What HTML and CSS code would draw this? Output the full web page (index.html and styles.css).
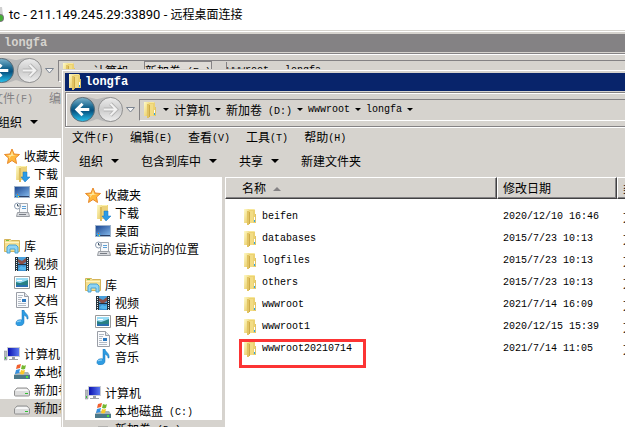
FILE: index.html
```html
<!DOCTYPE html>
<html lang="zh-CN">
<head>
<meta charset="utf-8">
<title>tc - 211.149.245.29:33890 - 远程桌面连接</title>
<link rel="stylesheet" href="styles.css">
</head>
<body>

<!-- icons -->
<svg class="defs" width="0" height="0">
  <defs>
    <linearGradient id="gold" x1="0" x2="1" y2="1"><stop offset="0" stop-color="#fffbc8"/><stop offset="1" stop-color="#e6c65c"/></linearGradient>
    <linearGradient id="blue" x1="0" y1="0" x2="0" y2="1"><stop offset="0" stop-color="#7fb4cc"/><stop offset=".4" stop-color="#17668f"/><stop offset=".55" stop-color="#06507f"/><stop offset="1" stop-color="#27c4f0"/></linearGradient>
    <linearGradient id="silver" x1="0" y1="0" x2="0" y2="1"><stop offset="0" stop-color="#ececec"/><stop offset=".5" stop-color="#cccccc"/><stop offset="1" stop-color="#eeeeee"/></linearGradient>
    <linearGradient id="screen" x1="0" y1="0" x2="1" y2="1"><stop offset="0" stop-color="#1c4690"/><stop offset="1" stop-color="#7fb4e8"/></linearGradient>
    <linearGradient id="monitor" x1="0" x2="1"><stop offset="0" stop-color="#0a10b0"/><stop offset="1" stop-color="#5a78f0"/></linearGradient>
  </defs>
  <symbol id="folder" viewBox="0 0 16 16">
    <path d="M2 0h10l1 1v13H2z" fill="#ecd272"/>
    <path d="M2 0h5v14H2z" fill="url(#gold)"/>
    <path d="M7 0h5v1H7z" fill="#f8e898"/>
    <path d="M5 2h2v14H5z" fill="#e2c462"/>
    <path d="M7 3h1v12H7z" fill="#cdaa48"/>
    <path d="M8 2h3v12H8z" fill="#f2dc84"/>
    <path d="M13 5h1v9h-1z" fill="#e0c468"/>
    <path d="M12 8h1v3h-1z" fill="#fff"/><path d="M12 11h1v2h-1z" fill="#2aa6e8"/>
  </symbol>
  <symbol id="star" viewBox="0 0 16 16">
    <path d="M8 1l2 5 5.500.500-4 3.500 1 5.500L8 12.500 3.500 15.500l1-5.500-4-3.500L6 6z" fill="#ffb83c" stroke="#e8892a"/>
    <path d="M8 3l1 4 3 .5-5 .5-2 3 .5-3L3 7l4 0z" fill="#ffe9a0"/>
  </symbol>
  <symbol id="download" viewBox="0 0 16 16">
    <path d="M2 0h11v14H2z" fill="#ecd27a"/>
    <path d="M2 0h5v14H2z" fill="url(#gold)"/>
    <path d="M7 0h5v1H7z" fill="#fdf2a8"/>
    <path d="M5 2h2v14H5z" fill="#dcbc5c"/>
    <path d="M9 6h4v5h3l-5 5-4-5h2z" fill="#2b9be6" stroke="#1674bc" stroke-width=".5"/>
  </symbol>
  <symbol id="desktop" viewBox="0 0 16 16">
    <path d="M0 2h16v12H0z" fill="#9fb4cc"/><path d="M1 3h14v9H1z" fill="url(#screen)"/>
    <path d="M1 12h14v1H1z" fill="#2b3f66"/>
    <circle cx="3.500" cy="11.500" r="2" fill="#35a0e0"/><path d="M3 10h1v1H3z" fill="#f05a28"/><path d="M4 12h1v1H4z" fill="#ffd21e"/>
  </symbol>
  <symbol id="recent" viewBox="0 0 16 16">
    <path d="M5.500 1.500h8v9h-8z" fill="#f6f8fa" stroke="#a4aab2"/>
    <path d="M8 4.500h4M8 6.500h4" stroke="#5aa0d8"/>
    <path d="M3.500 10.500h11l1 4h-13z" fill="#d8dade" stroke="#9a9ea4"/><path d="M5 12.500h7" stroke="#777c84"/>
    <circle cx="3.500" cy="4" r="3" fill="#fff" stroke="#8c9cb0"/><path d="M3.500 2v2h2" fill="none" stroke="#405468"/>
  </symbol>
  <symbol id="library" viewBox="0 0 16 16">
    <path d="M.5 1.500h6l1 1h8v11H.5z" fill="#f4df90" stroke="#d4b45a"/>
    <path d="M2 2h3v1H2z" fill="#7cc040"/><path d="M1 4h14v1H1z" fill="#fff4c0"/>
    <path d="M3 15V9l2-2h7l2 2v6h-3v-4H6v4z" fill="#8fd4f4" stroke="#4aa2d2"/>
  </symbol>
  <symbol id="video" viewBox="0 0 16 16">
    <path d="M1 1h14v14H1z" fill="#26333c"/><path d="M4 1h8v7H4z" fill="#4aa0dc"/><path d="M4 9h8v6H4z" fill="#3c90d0"/>
    <path d="M4 3l4 2 4-3v4l-3 2H6L4 6z" fill="#8a5048"/><path d="M4 13l3-3 3 1 2-1v4H8z" fill="#55b8ec"/>
    <path d="M2.500 2v13M13.500 2v13" stroke="#e8f0f0" stroke-dasharray="1 1"/>
  </symbol>
  <symbol id="picture" viewBox="0 0 16 16">
    <path d="M.5 2.500h15v12H.5z" fill="#fff" stroke="#9a9a9a"/>
    <path d="M2 4h12v9H2z" fill="#9adcf5"/><path d="M2 8l4 1 3-1 5-2v7H2z" fill="#288084"/><path d="M2 11h12v2H2z" fill="#2a6fb0"/><path d="M3 6h5v1H3z" fill="#fff"/>
  </symbol>
  <symbol id="document" viewBox="0 0 16 16">
    <path d="M2.500.500h8l4 4v11h-12z" fill="#fafbfd" stroke="#9a9ea6"/><path d="M10.500.500v4h4" fill="#dfe4ea" stroke="#9a9ea6"/>
    <path d="M4 3.500h5M4 5.500h4M4 7.500h3M4 9.500h3M4 11.500h8M4 13.500h8" stroke="#b2bac4"/><path d="M8 7h4v3H8z" fill="#2a78c0"/>
  </symbol>
  <symbol id="music" viewBox="0 0 16 16">
    <path d="M8 0h2c0 3 5 4 4 9h-1c0-3-2-3-3-4v7c0 5-9 5-8 1 0-3 4-4 6-3z" fill="#2e9ce2" stroke="#1873b8" stroke-width=".5"/>
    <path d="M3 12c1-1 3-1 4-1" stroke="#a4dcfa" fill="none"/>
  </symbol>
  <symbol id="computer" viewBox="0 0 16 16">
    <path d="M0 5h3v9H0z" fill="#b8bcc0" stroke="#8a8e94" stroke-width=".5"/><path d="M1 11h1v2H1z" fill="#38c038"/>
    <path d="M3 1h13v10H3z" fill="#c8ccd4"/><path d="M4 2h11v8H4z" fill="url(#monitor)"/>
    <path d="M8 11h3v2h3v1H5v-1h3z" fill="#9ca0a8"/>
  </symbol>
  <symbol id="system" viewBox="0 0 16 16">
    <path d="M2 8h12l2 3v3H0v-3z" fill="#a8b4b8"/><path d="M0 11h16v4H0z" fill="#4c7888"/><path d="M12 12h2v2h-2z" fill="#48e040"/>
    <path d="M3 1l4-1-1 4-4 1z" fill="#f06030"/><path d="M8 1c2 1 3 1 4 0l-1 4c-2 1-3 0-4 0z" fill="#74b830"/>
    <path d="M2 6l4-1-1 4-4 1z" fill="#3490e0"/><path d="M7 6c2 1 3 0 4 0l-1 4c-2 1-3 0-4 0z" fill="#fcc828"/>
  </symbol>
  <symbol id="drive" viewBox="0 0 16 16">
    <path d="M3 6h10l2.500 3v4q0 1-1 1h-13q-1 0-1-1V9z" fill="#dcdcdc" stroke="#909090"/><path d="M3 7h10l2 2H1z" fill="#f6f6f6"/>
    <path d="M11 11h3v1h-3z" fill="#30c030"/>
  </symbol>
  <symbol id="open" viewBox="0 0 16 16">
    <path d="M1.500 1.500h12v12h-12z" fill="#f4df90" stroke="#d4b45a"/><path d="M4.500 4.500h10v10h-10z" fill="#d8f0fc" stroke="#4aa2d2"/><path d="M6 7.500h6M6 9.500h6" stroke="#6abbe6"/>
  </symbol>
  <symbol id="travel" viewBox="0 0 58 28">
    <path d="M14 1q8 0 14 2h2q6-2 12-2a13 13 0 0 1 0 26q-6 0-12-3h-2q-6 3-14 3z" fill="#b8b8b8"/>
    <circle cx="14" cy="14" r="12.500" fill="url(#blue)" stroke="#5c6a74"/>
    <path d="M21 14H9M14 8l-6 6 6 6" fill="none" stroke="#fff" stroke-width="3"/>
    <circle cx="43" cy="14" r="12.500" fill="url(#silver)" stroke="#8c8c8c"/>
    <path d="M36 14h12M43 8l6 6-6 6" fill="none" stroke="#b4b4b4" stroke-width="4"/>
    <path d="M36 14h12M43 8l6 6-6 6" fill="none" stroke="#f2f2f2" stroke-width="2"/>
  </symbol>
  <symbol id="history" viewBox="0 0 9 6"><path d="M.5.500h8l-4 4.500z" fill="#f4f4f4" stroke="#7b8490"/></symbol>
</svg>

<header class="remote-bar">
  <svg class="remote-icon" viewBox="0 0 4 16"><path d="M0 0h2l1 8H0z" fill="#d0d0d0"/><circle cx="0" cy="11" r="4" fill="#777"/><circle cx="0" cy="11" r="3" fill="#43b035"/></svg>
  <span>tc - 211.149.245.29:33890 - <span class="zh">远程桌面连接</span></span>
</header>

<main class="desktop">

  <!-- E: window, behind -->
  <section class="window back">
    <div class="titlebar"><svg class="icon"><use href="#folder"/></svg>longfa</div>
    <div class="rebar">
      <button class="travel" aria-label="后退 前进"><svg><use href="#travel"/></svg></button>
      <button class="history" aria-label="历史"><svg><use href="#history"/></svg></button>
      <nav class="address">
        <svg class="icon"><use href="#folder"/></svg><i class="arrow"></i>
        <a href="#">计算机</a><i class="arrow"></i>
        <a href="#" class="hot">新加卷<span class="en"> (E:)</span></a><i class="arrow hot"></i>
        <a href="#" class="en">wwwroot</a><i class="arrow"></i>
        <a href="#" class="en">longfa</a><i class="arrow"></i>
      </nav>
    </div>
    <div class="menu">
      <button>文件<span class="en">(F)</span></button>
      <button>编辑<span class="en">(E)</span></button>
    </div>
    <div class="toolbar">
      <button class="drop">组织</button>
      <button aria-label="打开"><svg class="icon"><use href="#open"/></svg></button>
    </div>
    <div class="content">
      <nav class="tree">
        <ul>
          <li><a href="#" class="group"><svg class="icon"><use href="#star"/></svg>收藏夹</a></li>
          <li><a href="#"><svg class="icon"><use href="#download"/></svg>下载</a></li>
          <li><a href="#"><svg class="icon"><use href="#desktop"/></svg>桌面</a></li>
          <li><a href="#"><svg class="icon"><use href="#recent"/></svg>最近访问的位置</a></li>
        </ul>
        <ul>
          <li><a href="#" class="group"><svg class="icon"><use href="#library"/></svg>库</a></li>
          <li><a href="#"><svg class="icon"><use href="#video"/></svg>视频</a></li>
          <li><a href="#"><svg class="icon"><use href="#picture"/></svg>图片</a></li>
          <li><a href="#"><svg class="icon"><use href="#document"/></svg>文档</a></li>
          <li><a href="#"><svg class="icon"><use href="#music"/></svg>音乐</a></li>
        </ul>
        <ul>
          <li><a href="#" class="group"><svg class="icon"><use href="#computer"/></svg>计算机</a></li>
          <li><a href="#"><svg class="icon"><use href="#system"/></svg>本地磁盘</a></li>
          <li><a href="#"><svg class="icon"><use href="#drive"/></svg>新加卷</a></li>
          <li><a href="#" class="selected"><svg class="icon"><use href="#drive"/></svg>新加卷</a></li>
        </ul>
      </nav>
    </div>
  </section>

  <!-- D: window, active -->
  <section class="window front">
    <div class="titlebar"><svg class="icon"><use href="#folder"/></svg>longfa</div>
    <div class="rebar">
      <button class="travel" aria-label="后退 前进"><svg><use href="#travel"/></svg></button>
      <button class="history" aria-label="历史"><svg><use href="#history"/></svg></button>
      <nav class="address">
        <svg class="icon"><use href="#folder"/></svg><i class="arrow"></i>
        <a href="#">计算机</a><i class="arrow"></i>
        <a href="#">新加卷<span class="en"> (D:)</span></a><i class="arrow"></i>
        <a href="#" class="en">wwwroot</a><i class="arrow"></i>
        <a href="#" class="en">longfa</a><i class="arrow"></i>
      </nav>
    </div>
    <div class="menu">
      <button>文件<span class="en">(F)</span></button>
      <button>编辑<span class="en">(E)</span></button>
      <button>查看<span class="en">(V)</span></button>
      <button>工具<span class="en">(T)</span></button>
      <button>帮助<span class="en">(H)</span></button>
    </div>
    <div class="toolbar">
      <button class="drop">组织</button>
      <button class="drop">包含到库中</button>
      <button class="drop">共享</button>
      <button>新建文件夹</button>
    </div>
    <div class="content">
      <nav class="tree">
        <ul>
          <li><a href="#" class="group"><svg class="icon"><use href="#star"/></svg>收藏夹</a></li>
          <li><a href="#"><svg class="icon"><use href="#download"/></svg>下载</a></li>
          <li><a href="#"><svg class="icon"><use href="#desktop"/></svg>桌面</a></li>
          <li><a href="#"><svg class="icon"><use href="#recent"/></svg>最近访问的位置</a></li>
        </ul>
        <ul>
          <li><a href="#" class="group"><svg class="icon"><use href="#library"/></svg>库</a></li>
          <li><a href="#"><svg class="icon"><use href="#video"/></svg>视频</a></li>
          <li><a href="#"><svg class="icon"><use href="#picture"/></svg>图片</a></li>
          <li><a href="#"><svg class="icon"><use href="#document"/></svg>文档</a></li>
          <li><a href="#"><svg class="icon"><use href="#music"/></svg>音乐</a></li>
        </ul>
        <ul>
          <li><a href="#" class="group"><svg class="icon"><use href="#computer"/></svg>计算机</a></li>
          <li><a href="#"><svg class="icon"><use href="#system"/></svg><span>本地磁盘<span class="en"> (C:)</span></span></a></li>
          <li><a href="#" class="selected"><svg class="icon"><use href="#drive"/></svg><span>新加卷<span class="en"> (D:)</span></span></a></li>
        </ul>
      </nav>
      <div class="files">
        <table>
          <thead>
            <tr><th class="name">名称<i class="sort"></i></th><th class="date">修改日期</th><th class="type">类型</th></tr>
          </thead>
          <tbody>
            <tr><td><a href="#"><svg class="icon"><use href="#folder"/></svg>beifen</a></td><td>2020/12/10 16:46</td><td class="zh">文件夹</td></tr>
            <tr><td><a href="#"><svg class="icon"><use href="#folder"/></svg>databases</a></td><td>2015/7/23 10:13</td><td class="zh">文件夹</td></tr>
            <tr><td><a href="#"><svg class="icon"><use href="#folder"/></svg>logfiles</a></td><td>2015/7/23 10:13</td><td class="zh">文件夹</td></tr>
            <tr><td><a href="#"><svg class="icon"><use href="#folder"/></svg>others</a></td><td>2015/7/23 10:13</td><td class="zh">文件夹</td></tr>
            <tr><td><a href="#"><svg class="icon"><use href="#folder"/></svg>wwwroot</a></td><td>2021/7/14 16:09</td><td class="zh">文件夹</td></tr>
            <tr><td><a href="#"><svg class="icon"><use href="#folder"/></svg>wwwroot1</a></td><td>2020/12/15 15:39</td><td class="zh">文件夹</td></tr>
            <tr><td class="marked"><a href="#"><svg class="icon"><use href="#folder"/></svg>wwwroot20210714</a></td><td>2021/7/14 11:05</td><td class="zh">文件夹</td></tr>
          </tbody>
        </table>
      </div>
    </div>
  </section>
</main>
</body>
</html>
```
FILE: styles.css
```css
*, *::before, *::after {
  box-sizing: border-box;
}
body {
  margin: 0;
  height: 100vh;
  display: flex;
  flex-direction: column;
  overflow: hidden;
  background: #fff;
  color: #000;
  font: 12px/18px "Noto Sans CJK SC", sans-serif;
}
a {
  color: inherit;
  text-decoration: none;
}
button {
  padding: 0;
  border: 0;
  background: none;
  color: inherit;
  font: inherit;
  white-space: nowrap;
}
ul {
  margin: 0 0 18px;
  padding: 0;
  list-style: none;
}
.defs {
  position: absolute;
}
.icon {
  flex: none;
  width: 16px;
  height: 16px;
}
.en {
  font-family: "Liberation Mono", monospace;
  font-size: 10px;
  line-height: 10px;
  vertical-align: 1px;
  white-space: pre;
}

/* remote desktop caption */
.remote-bar {
  flex: none;
  display: flex;
  align-items: center;
  gap: 5px;
  height: 30px;
  font-family: Roboto, "Noto Sans CJK SC", sans-serif;
  font-size: 13px;
}
.remote-bar .zh {
  font-size: 12px;
}
.remote-icon {
  width: 4px;
  height: 16px;
}
.desktop {
  position: relative;
  flex: 1;
  overflow: hidden;
}

/* explorer windows */
.window {
  position: absolute;
  right: -80px;
  bottom: -40px;
  display: flex;
  flex-direction: column;
  padding: 2px;
  border: 1px solid #d6d3ce;
  background: #d6d3ce;
  box-shadow: inset 1px 1px #fff;
}
.back {
  left: -20px;
  top: 0;
}
.front {
  left: 61px;
  top: 39px;
}
.window > div {
  flex: none;
}
.titlebar {
  display: flex;
  align-items: center;
  gap: 2px;
  height: 18px;
  margin: 1px 0 1px 1px;
  padding-left: 2px;
  background: #08246b;
  color: #fff;
  font: bold 12px/18px "Liberation Mono", monospace;
}
.back .titlebar {
  background: #848284;
  color: #d6d3ce;
}
.rebar {
  display: flex;
  align-items: center;
  height: 35px;
  margin-left: 1px;
  padding-left: 3px;
  border: 1px solid #848284;
  box-shadow: inset 1px 1px #fff, 0 1px #fff;
}
.travel svg {
  display: block;
  width: 56px;
  height: 27px;
}
.history {
  padding: 0 3px 0 1px;
}
.history svg {
  display: block;
  width: 9px;
  height: 6px;
}
.address {
  flex: 1;
  display: flex;
  align-items: center;
  height: 22px;
  margin-left: 1px;
  padding-left: 2px;
  border: 1px solid;
  border-color: #848284 #fff #fff #848284;
}
.arrow {
  flex: none;
  display: flex;
  justify-content: center;
  width: 16px;
}
.arrow::after {
  content: "";
  border: 3px solid transparent;
  border-top-color: #000;
  border-bottom: 0;
}
.address a.hot {
  outline: 1px solid #848284;
  background: #dedbd6;
}
.arrow.hot {
  height: 18px;
  align-items: center;
  border-right: 1px solid #848284;
}
.menu {
  display: flex;
  align-items: center;
  gap: 16px;
  height: 20px;
  padding-left: 8px;
}
.back .menu {
  color: #848284;
}
.toolbar {
  display: flex;
  align-items: center;
  gap: 22px;
  height: 30px;
  padding: 0 0 2px 15px;
}
.drop {
  display: flex;
  align-items: center;
  gap: 8px;
}
.drop::after {
  content: "";
  border: 4px solid transparent;
  border-top-color: #000;
  border-bottom: 0;
}
.window > .content {
  flex: 1;
  display: flex;
  min-height: 0;
  margin-left: 1px;
}

/* navigation pane */
.tree {
  flex: none;
  width: 157px;
  padding-top: 9px;
  overflow: hidden;
  background: #fff;
}
.tree a {
  display: flex;
  align-items: center;
  gap: 4px;
  height: 18px;
  padding-left: 30px;
  white-space: nowrap;
}
.tree .group {
  padding-left: 20px;
}
.tree .selected {
  background: #d6d3ce;
}

/* file list */
.files {
  flex: 1;
  margin-left: 3px;
  background: #fff;
}
table {
  width: 100%;
  table-layout: fixed;
  border-collapse: separate;
  border-spacing: 0;
}
th {
  height: 22px;
  padding: 0 0 0 5px;
  border: 1px solid;
  border-color: #fff #424142 #424142 #fff;
  background: #d6d3ce;
  box-shadow: inset -1px -1px #848284;
  font-weight: normal;
  text-align: left;
}
.name {
  width: 272px;
  padding-left: 16px;
}
.date {
  width: 120px;
}
.sort {
  display: inline-block;
  margin-left: 7px;
  border: 4px solid transparent;
  border-top: 0;
  border-bottom-color: #848284;
  vertical-align: 2px;
}
tbody::before {
  content: "";
  display: block;
  height: 6px;
}
td {
  height: 22px;
  padding: 2px 0 0 6px;
  font: 10px/18px "Liberation Mono", monospace;
}
td.zh {
  font: 12px/18px "Noto Sans CJK SC", sans-serif;
}
td:first-child {
  padding-left: 17px;
}
td a {
  display: flex;
  align-items: center;
  gap: 4px;
}
.marked {
  position: relative;
}
.marked::after {
  content: "";
  position: absolute;
  left: 14px;
  top: 2px;
  width: 127px;
  height: 29px;
  border: 3px solid #fc3434;
}
```
